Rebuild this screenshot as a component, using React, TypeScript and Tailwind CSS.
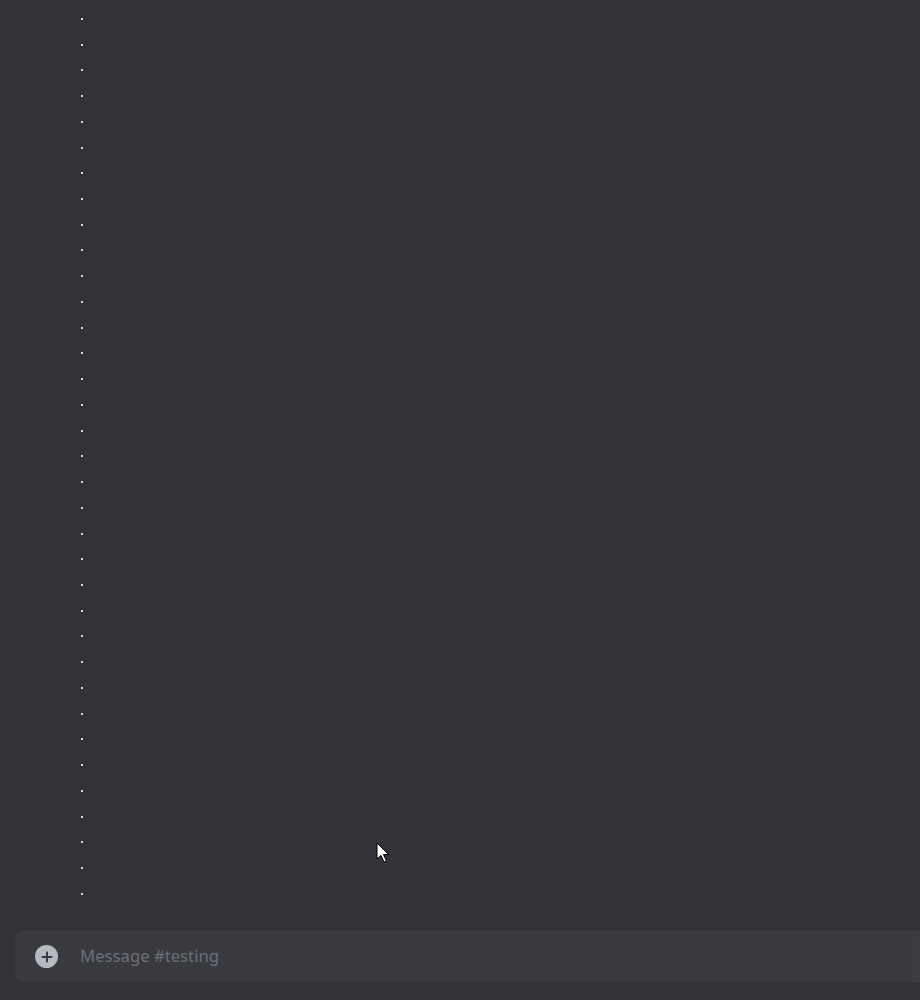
import React from "react";

export default function App() {
  const dots = Array.from({ length: 35 });
  return (
    <div className="relative h-[1000px] w-[920px] overflow-hidden bg-[#313338] font-['Noto_Sans','Open_Sans',sans-serif]">
      <div className="flex h-[931px] flex-col pt-[6px]">
        {dots.map((_, i) => (
          <div key={i} className="flex h-[25.735px] shrink-0 items-center pl-[81px]">
            <div className="h-[2px] w-[2px] bg-[#dbdee1]" />
          </div>
        ))}
      </div>
      <div className="ml-[15px] flex h-[51px] items-center rounded-l-[8px] bg-[#383a40]">
        <div className="ml-[20px] flex h-[23px] w-[23px] items-center justify-center rounded-full bg-[#b5bac1]">
          <svg width="14" height="14" viewBox="0 0 14 14">
            <path d="M7 2.5v9M2.5 7h9" stroke="#383a40" strokeWidth="2" strokeLinecap="round" />
          </svg>
        </div>
        <span className="ml-[22px] -mt-[1px] text-[16.7px] leading-none text-[#6d6f78]">Message #testing</span>
        <div className="ml-auto h-full w-[10px] bg-[#3b3c42]" />
      </div>
      <svg className="absolute left-[376px] top-[842px]" width="16" height="24" viewBox="0 0 16 24">
        <path d="M1 1 L1 17 L5 13.5 L8 20 L10.5 19 L7.5 12.5 L12.5 12.5 Z" fill="#ffffff" stroke="#000000" strokeWidth="1" strokeLinejoin="round" />
      </svg>
    </div>
  );
}
